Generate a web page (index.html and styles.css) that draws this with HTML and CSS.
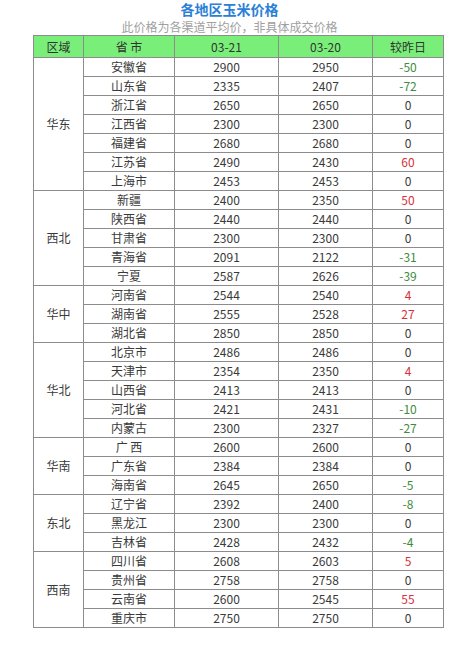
FILE: index.html
```html
<!DOCTYPE html>
<html lang="zh">
<head>
<meta charset="utf-8">
<link rel="stylesheet" href="styles.css">
</head>
<body>
<div class="page">
  <h1 class="title">各地区玉米价格</h1>
  <p class="sub">此价格为各渠道平均价，非具体成交价格</p>
  <table class="grid">
    <colgroup><col class="c1"><col class="c2"><col class="c3"><col class="c4"><col class="c5"></colgroup>
    <thead>
      <tr><th>区域</th><th>省 市</th><th>03-21</th><th>03-20</th><th>较昨日</th></tr>
    </thead>
    <tbody>
      <tr><td rowspan="7">华东</td><td>安徽省</td><td>2900</td><td>2950</td><td class="dn">-50</td></tr>
      <tr><td>山东省</td><td>2335</td><td>2407</td><td class="dn">-72</td></tr>
      <tr><td>浙江省</td><td>2650</td><td>2650</td><td>0</td></tr>
      <tr><td>江西省</td><td>2300</td><td>2300</td><td>0</td></tr>
      <tr><td>福建省</td><td>2680</td><td>2680</td><td>0</td></tr>
      <tr><td>江苏省</td><td>2490</td><td>2430</td><td class="up">60</td></tr>
      <tr><td>上海市</td><td>2453</td><td>2453</td><td>0</td></tr>
      <tr><td rowspan="5">西北</td><td>新疆</td><td>2400</td><td>2350</td><td class="up">50</td></tr>
      <tr><td>陕西省</td><td>2440</td><td>2440</td><td>0</td></tr>
      <tr><td>甘肃省</td><td>2300</td><td>2300</td><td>0</td></tr>
      <tr><td>青海省</td><td>2091</td><td>2122</td><td class="dn">-31</td></tr>
      <tr><td>宁夏</td><td>2587</td><td>2626</td><td class="dn">-39</td></tr>
      <tr><td rowspan="3">华中</td><td>河南省</td><td>2544</td><td>2540</td><td class="up">4</td></tr>
      <tr><td>湖南省</td><td>2555</td><td>2528</td><td class="up">27</td></tr>
      <tr><td>湖北省</td><td>2850</td><td>2850</td><td>0</td></tr>
      <tr><td rowspan="5">华北</td><td>北京市</td><td>2486</td><td>2486</td><td>0</td></tr>
      <tr><td>天津市</td><td>2354</td><td>2350</td><td class="up">4</td></tr>
      <tr><td>山西省</td><td>2413</td><td>2413</td><td>0</td></tr>
      <tr><td>河北省</td><td>2421</td><td>2431</td><td class="dn">-10</td></tr>
      <tr><td>内蒙古</td><td>2300</td><td>2327</td><td class="dn">-27</td></tr>
      <tr><td rowspan="3">华南</td><td>广 西</td><td>2600</td><td>2600</td><td>0</td></tr>
      <tr><td>广东省</td><td>2384</td><td>2384</td><td>0</td></tr>
      <tr><td>海南省</td><td>2645</td><td>2650</td><td class="dn">-5</td></tr>
      <tr><td rowspan="3">东北</td><td>辽宁省</td><td>2392</td><td>2400</td><td class="dn">-8</td></tr>
      <tr><td>黑龙江</td><td>2300</td><td>2300</td><td>0</td></tr>
      <tr><td>吉林省</td><td>2428</td><td>2432</td><td class="dn">-4</td></tr>
      <tr><td rowspan="4">西南</td><td>四川省</td><td>2608</td><td>2603</td><td class="up">5</td></tr>
      <tr><td>贵州省</td><td>2758</td><td>2758</td><td>0</td></tr>
      <tr><td>云南省</td><td>2600</td><td>2545</td><td class="up">55</td></tr>
      <tr><td>重庆市</td><td>2750</td><td>2750</td><td>0</td></tr>
    </tbody>
  </table>
</div>
</body>
</html>
```
FILE: styles.css
```css
html, body {
  margin: 0;
  padding: 0;
  background: #ffffff;
}
.page {
  width: 459px;
  font-family: "Noto Sans CJK SC", "Noto Sans", sans-serif;
  color: #333333;
}
.title {
  margin: 0;
  padding-top: 1px;
  height: 17px;
  line-height: 17px;
  font-size: 14px;
  font-weight: bold;
  color: #2b7fd6;
  text-align: center;
}
.sub {
  margin: 0;
  height: 17px;
  line-height: 17px;
  font-size: 12px;
  color: #a0a0a0;
  text-align: center;
}
.grid {
  margin: 0 0 0 33px;
  border-collapse: collapse;
  table-layout: fixed;
  width: 410px;
  font-size: 12px;
}
.c1 { width: 50px; }
.c2 { width: 91px; }
.c3 { width: 104px; }
.c4 { width: 94px; }
.c5 { width: 71px; }
.grid th, .grid td {
  border: 1px solid #8c8c8c;
  text-align: center;
  padding: 0;
  font-weight: normal;
  line-height: 18px;
}
.grid th {
  height: 21px;
  background: #79ef79;
  color: #333333;
}
.grid td {
  height: 18px;
  color: #3a3a3a;
}
.grid td.dn { color: #3d8c3d; }
.grid td.up { color: #d8303a; }
```
